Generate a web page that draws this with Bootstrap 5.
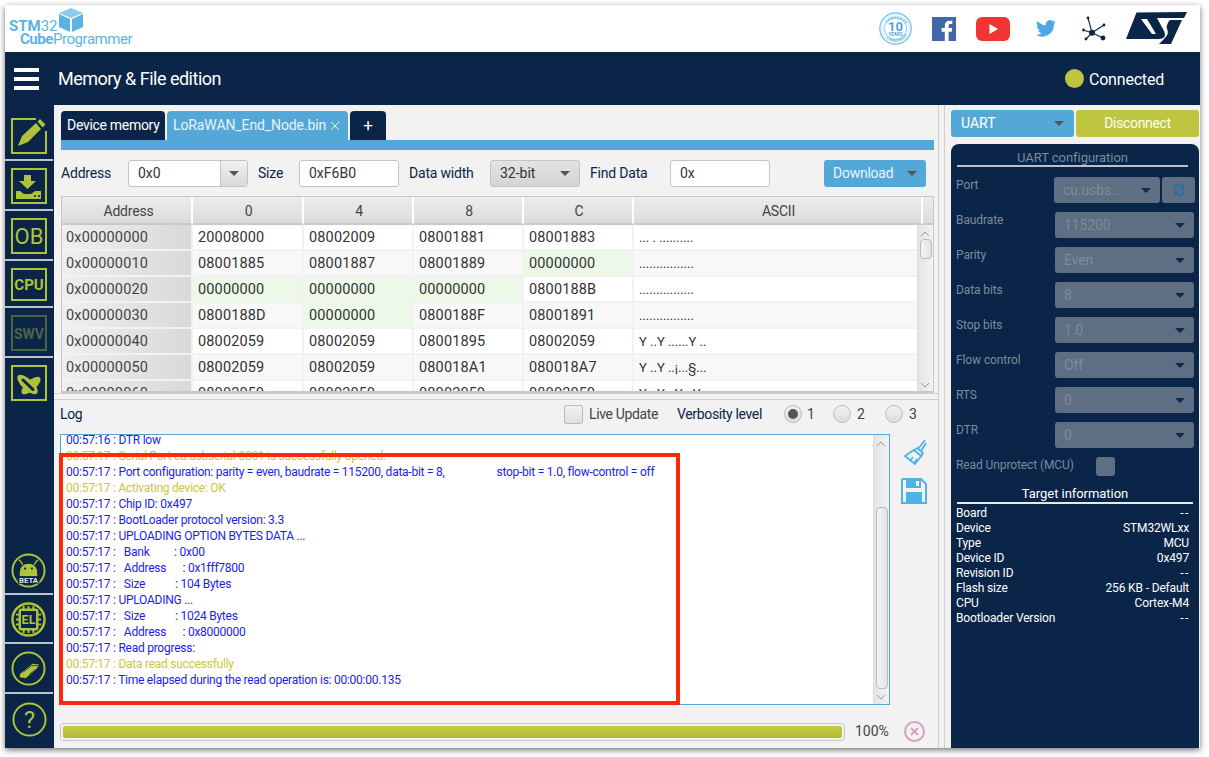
<!DOCTYPE html>
<html lang="en">
<head>
<meta charset="utf-8">
<title>STM32CubeProgrammer</title>
<link rel="stylesheet" href="https://cdn.jsdelivr.net/npm/bootstrap@5.3.0/dist/css/bootstrap.min.css">
<style>
html,body{height:100%;overflow:hidden;background:#fff}
body{font-family:"Roboto","Liberation Sans",sans-serif;font-variant-ligatures:none;padding:5px 9px 9px 5px;color:#0a2548}
.appwin{width:1195px;height:743px;box-shadow:0 2px 6px rgba(0,0,0,.55);background:#f2f2f2;position:relative;overflow:hidden}
.apphead{height:47px;background:#fff;flex:none}
.logo-box{width:135px;height:47px;position:relative;color:#5cb3e0;line-height:1}
.logo-st32{position:absolute;left:4px;top:14px;font-size:15px;font-weight:700}
.logo-st32 span{font-weight:400}
.logo-cube{position:absolute;left:15px;top:27px;font-size:15px;font-weight:700;letter-spacing:-.45px;white-space:nowrap}
.logo-cube span{font-weight:400}
.logo-svg{position:absolute;left:53px;top:2px}
.head-icons{padding-right:13px}
.titlebar{height:53px;background:#0a2548;color:#fff;flex:none;padding-left:9px}
.burger{width:25px;height:22px;display:flex;flex-direction:column;justify-content:space-between;margin-right:19px}
.burger i{display:block;height:4px;background:#fff}
.title-txt{font-size:18px;letter-spacing:-.5px}
.conn-dot{width:19px;height:19px;border-radius:50%;background:#bec53e;margin-right:5px}
.conn-txt{font-size:16px;letter-spacing:-.2px;margin-right:36px;padding-top:2px}
.sidenav{width:49px;background:#0a2548;flex:none;padding-top:13px}
.navcell{height:50px;flex:none;padding-top:7px}
.navcell.firstcell{height:43px;padding-top:0}
.navcell.shortcell{height:47px}
.navcell.sep{border-bottom:2px solid #bcc2ca;width:48px}
.navcell svg{margin-left:6px;display:block}
.side-spacer{flex:1}
.navround{flex:none;width:48px}
.navround svg{display:block}
.navround.sep{border-bottom:2px solid #bcc2ca}
.centerpane{width:884px;flex:none;padding:0;position:relative}
.tabrow{padding:6px 0 0 7px;height:35px;flex:none}
.tabitem{height:29px;padding:0 6px;font-size:14px;letter-spacing:-.3px;color:#fff;background:#0a2548;border-radius:4px 4px 0 0;margin-right:2px;flex:none;white-space:nowrap}
.tabitem.on{background:#54a8d8;letter-spacing:-.1px;color:#e8f3fa}
.tabstrip{height:10px;background:#54a8d8;margin:0 4px 0 7px;flex:none}
.toolrow{height:46px;padding:0 0 0 7px;font-size:14px;letter-spacing:-.2px;flex:none}
.fieldbox{height:27px;background:#fff;border:1px solid #c4c4c4;border-radius:3px;font-size:14px;color:#333;padding:0 9px;display:flex;align-items:center;letter-spacing:0}
.combo-btn{width:27px;height:25px;background:linear-gradient(#f2f2f2,#d8d8d8);border-left:1px solid #c4c4c4;display:flex;align-items:center;justify-content:center;margin-right:-9px;border-radius:0 3px 3px 0}
.tri{display:block;width:0;height:0;border-left:5px solid transparent;border-right:5px solid transparent;border-top:5px solid #555;flex:none}
.graybox{background:linear-gradient(#e4e4e4,#d4d4d4)}
.dl-btn{width:102px;height:27px;background:#54a8d8;color:#e8f3fa;border-radius:3px;font-size:14px;padding:0 9px;letter-spacing:-.25px}
.tablewrap{margin:0 4px 0 7px;height:197px;border:1px solid #c8c8c8;border-bottom:2px solid #c8c8c8;background:#fff;position:relative;overflow:hidden;flex:none}
.hextable{width:100%;table-layout:fixed;border-collapse:separate;border-spacing:0;margin:0;font-size:14.5px}
.hextable th{height:28px;font-weight:400;text-align:center;color:#444;background:linear-gradient(#ececec,#dcdcdc);border-right:2px solid #fff;border-bottom:2px solid #c8c8c8;padding:2px 0 0 2px;font-size:14px;letter-spacing:-.2px}
.hextable th:first-child{padding-left:4px}
.hextable th:last-child{border-right:0}
.hextable td{height:26px;padding:2px 0 0 5px;color:#333;border-right:2px solid #f2f2f2;border-bottom:2px solid #f2f2f2;background:#fff;white-space:nowrap;overflow:hidden;letter-spacing:.15px}
.hextable tr:nth-child(even) td{background:#f8f8f8}
.hextable td.addrcell,.hextable tr:nth-child(even) td.addrcell{background:linear-gradient(90deg,#efefef,#d9d9d9);color:#444;padding-left:4px}
.hextable td.zerocell,.hextable tr:nth-child(even) td.zerocell{background:#ecf9e8}
.hextable td.asciicell{font-size:13px;letter-spacing:0}
.vscroll{position:absolute;right:0;bottom:0;width:16px;background:linear-gradient(90deg,#e4e4e4,#f2f2f2);border-left:1px solid #ddd}
.vscroll.tblscroll{top:28px}
.scarrow{position:absolute;left:3px;width:8px;height:8px}
.thumb{position:absolute;left:2px;width:12px;background:linear-gradient(90deg,#f4f4f4,#e2e2e2);border:1px solid #bbb;border-radius:4px}
.splitline{height:7px;border-top:1px solid #d0d0d0;border-bottom:1px solid #d0d0d0;background:#f2f2f2;flex:none}
.loghead{height:34px;padding:0 21px 6px 6px;font-size:14px;letter-spacing:-.35px;flex:none}
.logbox{margin-left:6px;width:830px;height:271px;background:#fff;border:1px solid #54a8d8;position:relative;overflow:hidden;font-size:12px;line-height:16px;color:#1b1bff;letter-spacing:-.25px;flex:none}
.loglines{margin-top:-3px;padding-left:5px;white-space:pre}
.loglines .okline{color:#c9c93a}
.logtools{margin-left:11px;gap:13px;padding-top:5px}
.fake-check{width:19px;height:19px;background:linear-gradient(#f2f2f2,#e0e0e0);border:1px solid #bbb;border-radius:2px;margin-right:6px;flex:none}
.fake-radio{width:18px;height:18px;border-radius:50%;background:linear-gradient(#f2f2f2,#dcdcdc);border:1px solid #bbb;display:flex;align-items:center;justify-content:center;margin-right:5px;flex:none}
.fake-radio i{width:10px;height:10px;border-radius:50%;background:#555}
.greytxt{color:#444}
.progrow{padding:16px 0 0 6px;flex:none}
.progoutline{width:785px;height:18px;border:1px solid #c8c8c8;border-radius:3px;background:#f2f2f2;padding:2px}
.progfill{height:100%;background:linear-gradient(#c4ca44,#b5bb38);border-radius:2px}
.progtxt{font-size:14px;margin-left:10px;color:#444;width:49px}
.rightgut{width:7px;border-left:1px solid #d0d0d0;border-right:1px solid #d0d0d0;flex:none}
.rightpane{flex:1;padding:5px 1px 0 6px;min-width:0}
.toprow{gap:2px;height:27px;flex:none}
.uart-sel{width:123px;background:#54a8d8;color:#fff;border-radius:3px;font-size:14px;padding:0 10px;flex:none}
.disc-btn{width:123px;background:#bec53e;color:#fdfdf2;border-radius:3px;font-size:14px;letter-spacing:-.35px;flex:none}
.confpanel{background:#0a2548;border-radius:8px 8px 0 0;margin-top:7px;flex:1;padding:6px 6px 0 6px;font-size:12px;line-height:15px;color:#fff;min-height:0}
.confhead{color:#7c8a9d;text-align:center;font-size:13px;border-bottom:2px solid #b9c0c9;margin-right:5px;height:17px;line-height:15px;letter-spacing:-.05px;flex:none}
.confgap{height:16px;flex:none}
.confrow{height:35px;color:#7c8a9d;position:relative;letter-spacing:-.1px;flex:none}
.confrow.lastconf{height:15px}
.conflabel{width:98px;flex:none;margin:-5px 0 0 -1px;padding-right:0}
.conflabel.widelabel{width:140px}
.dimsel{height:26px;width:139px;flex:none;background:#5e6e83;border-radius:3px;color:#7f8b9a;font-size:14px;padding:0 9px;margin:-6px 0 0 1px}
.dimsel .tri{border-top-color:#0e2a4d}
.dimsel.dimsel-port{width:106px;margin-left:0}
.refresh-btn{width:33px;height:26px;background:#5e6e83;border-radius:3px;margin-left:2px;margin-top:-6px;flex:none}
.dimcheck{width:19px;height:19px;background:#5e6e83;border-radius:3px;margin-top:-6px;flex:none}
.tgthead{color:#fff;text-align:center;font-size:13px;border-bottom:2px solid #e8e8e8;margin:8px 0 2px 0;height:18px;line-height:16px;letter-spacing:-.05px;flex:none}
.tgtrow{height:15px;letter-spacing:-.15px;padding-right:4px;margin-left:-1px;flex:none}
.dashval{letter-spacing:1.6px;margin-right:-1px}
.redbox{position:absolute;left:54px;top:448px;width:621px;height:252px;border:4px solid #fa2a0a;pointer-events:none}
</style>
</head>
<body>
<div class="appwin d-flex flex-column">
  <header class="apphead d-flex justify-content-between align-items-center">
    <div class="logo-box">
      <span class="logo-st32">STM<span>32</span></span>
      <span class="logo-cube">Cube<span>Programmer</span></span>
      <svg class="logo-svg" width="26" height="26" viewBox="0 0 26 26"><path d="M13 1 25 6 13 11 1 6Z" fill="#8ccbec"/><path d="M1 7 12 12V25L1 20Z" fill="#5cb3e0"/><path d="M25 7 14 12V25L25 20Z" fill="#5cb3e0"/></svg>
    </div>
    <div class="head-icons d-flex align-items-center">
      <svg width="33" height="33" viewBox="0 0 33 33" class="me-3"><defs><path id="arcTop" d="M4.300 18A12.300 12.300 0 0 1 28.700 18"/><path id="arcBot" d="M3.200 18A13.400 13.400 0 0 0 29.800 18"/></defs><circle cx="16.500" cy="16.500" r="15.700" fill="#eaf6fc" stroke="#6cbfe8" stroke-width="1.200"/><circle cx="16.500" cy="16.500" r="11" fill="#fff" stroke="#6cbfe8" stroke-width=".8"/><text font-size="4" font-family="Roboto" font-weight="700" fill="#6cbfe8"><textPath href="#arcTop" startOffset="8">LONGEVITY</textPath></text><text font-size="3.600" font-family="Roboto" font-weight="700" fill="#6cbfe8"><textPath href="#arcBot" startOffset="9">COMMITMENT</textPath></text><text x="16.500" y="19" text-anchor="middle" font-size="13" font-weight="700" font-family="Roboto" fill="#4ba5d8">10</text><text x="16.500" y="24" text-anchor="middle" font-size="4.500" font-weight="700" font-family="Roboto" fill="#4ba5d8">YEARS</text></svg>
      <svg width="24" height="24" viewBox="0 0 24 24" style="margin:0 20px 0 4px"><rect width="24" height="24" fill="#4267a8"/><path d="M16.600 24v-9.300h3.100l.5-3.600h-3.600V8.800c0-1 .3-1.800 1.800-1.800h1.900V3.800c-.3 0-1.500-.1-2.800-.1-2.800 0-4.700 1.700-4.700 4.800v2.600H9.600v3.600h3.200V24z" fill="#fff"/></svg>
      <svg width="34" height="24" viewBox="0 0 34 24" style="margin-right:26px"><rect width="34" height="24" rx="6" fill="#f03634"/><path d="M13.500 7v10l8.500-5z" fill="#fff"/></svg>
      <svg width="20" height="17" viewBox="0 0 24 20" style="margin-right:26px"><path d="M24 2.400a9.800 9.800 0 0 1-2.800.8A4.900 4.900 0 0 0 23.300.5a9.800 9.800 0 0 1-3.100 1.200 4.900 4.900 0 0 0-8.400 4.500A14 14 0 0 1 1.700 1a4.900 4.900 0 0 0 1.500 6.600 4.900 4.900 0 0 1-2.200-.6c0 2.400 1.700 4.400 3.900 4.900a4.900 4.900 0 0 1-2.200.1 4.900 4.900 0 0 0 4.600 3.400A9.900 9.900 0 0 1 0 17.400 14 14 0 0 0 21.500 5v-.6A10 10 0 0 0 24 2.400z" fill="#4ba8e6"/></svg>
      <svg width="26" height="26" viewBox="0 -1 26 26" style="margin-right:18px"><g stroke="#0a2548" stroke-width="1.100"><path d="M10 15.700 6 1M10 15.700 1 13M10 15.700 22 8M10 15.700 21 21M10 15.700 4 22"/></g><g fill="#0a2548"><circle cx="10" cy="15.700" r="3"/><circle cx="6" cy="1" r="1.400"/><circle cx="1.500" cy="13" r="1.400"/><circle cx="22" cy="8" r="1.400"/><circle cx="21" cy="21" r="2.400"/><circle cx="4" cy="22" r="1.400"/></g></svg>
      <svg width="61" height="33" viewBox="0 0 61 33"><path d="M10.500.5 61 0 58 6H31L38 19C40.500 24 38 27 33 27H0Z" fill="#0a2548"/><path d="M15 7H21L30 22H26Z" fill="#fff"/><path d="M44 8H56L45 32H33L38 27C41 24 43 21 41 17 40 14 42 10 44 8Z" fill="#0a2548"/></svg>
    </div>
  </header>

  <div class="titlebar d-flex align-items-center">
    <div class="burger"><i></i><i></i><i></i></div>
    <div class="title-txt flex-grow-1">Memory &amp; File edition</div>
    <span class="conn-dot"></span><span class="conn-txt">Connected</span>
  </div>

  <div class="d-flex flex-grow-1" style="min-height:0">
    <nav class="sidenav d-flex flex-column">
      <div class="navcell firstcell sep"><svg width="36" height="36" viewBox="0 0 36 36"><path d="M25 1H1V35H35V13" fill="none" stroke="#aec23a" stroke-width="2"/><path d="M7 28 11 18 25 5 30 11 17 24Z" fill="#aec23a"/><path d="M26.500 3.500 29 1 34.500 6.500 31.500 9.500Z" fill="#aec23a"/></svg></div>
      <div class="navcell sep"><svg width="36" height="36" viewBox="0 0 36 36"><rect x="1" y="1" width="34" height="34" fill="none" stroke="#aec23a" stroke-width="2"/><path d="M13 7H20V13H25L16.500 21 8 13H13Z" fill="#aec23a"/><path d="M5 23H9L13 26H20L24 23H30V31H5Z" fill="#aec23a"/><path d="M23 28H25M27 28H29" stroke="#0a2548" stroke-width="1.500"/></svg></div>
      <div class="navcell sep"><svg width="36" height="36" viewBox="0 0 36 36"><rect x="1" y="1" width="34" height="34" fill="none" stroke="#aec23a" stroke-width="2"/><text x="18" y="26" text-anchor="middle" font-size="22" font-family="Roboto" fill="#aec23a">OB</text></svg></div>
      <div class="navcell shortcell sep"><svg width="36" height="33" viewBox="0 0 36 33"><rect x="1" y="1" width="34" height="31" fill="none" stroke="#aec23a" stroke-width="2"/><text x="18" y="22" text-anchor="middle" font-size="15" font-weight="700" font-family="Roboto" fill="#aec23a">CPU</text></svg></div>
      <div class="navcell sep"><svg width="36" height="36" viewBox="0 0 36 36" opacity=".4"><rect x="1" y="1" width="34" height="34" fill="none" stroke="#aec23a" stroke-width="2"/><text x="18" y="23.500" text-anchor="middle" font-size="14" font-weight="700" font-family="Roboto" fill="#aec23a">SWV</text></svg></div>
      <div class="navcell"><svg width="36" height="36" viewBox="0 0 36 36"><rect x="1" y="1" width="34" height="34" fill="none" stroke="#aec23a" stroke-width="2"/><ellipse cx="20" cy="20.500" rx="12" ry="5" transform="rotate(-42 20 20.500)" fill="#aec23a"/><ellipse cx="16.500" cy="19.500" rx="13" ry="5.500" transform="rotate(43 16.500 19.500)" fill="#aec23a"/><path d="M12 15 22 24.500" stroke="#0a2548" stroke-width="3" stroke-linecap="round"/></svg></div>
      <div class="side-spacer"></div>
      <div class="navround sep" style="height:48px"><svg width="35" height="35" viewBox="0 0 36 36" style="margin:6px 0 0 6px"><circle cx="18" cy="18" r="16.500" fill="none" stroke="#aec23a" stroke-width="2"/><path d="M12 12C11 9 10 8 8 7M24 12C25 9 26 8 28 7" fill="none" stroke="#aec23a" stroke-width="1.500"/><path d="M9 21C9 14 13 11 18 11S27 14 27 21V24H9Z" fill="#aec23a"/><circle cx="14.500" cy="16" r="1.200" fill="#0a2548"/><circle cx="21.500" cy="16" r="1.200" fill="#0a2548"/><rect x="7" y="24" width="22" height="7.500" fill="#0a2548"/><text x="18" y="30.500" text-anchor="middle" font-size="8" font-weight="700" font-family="Roboto" fill="#dfe3e8">BETA</text></svg></div>
      <div class="navround sep" style="height:49px"><svg width="35" height="35" viewBox="0 0 36 36" style="margin:7px 0 0 6px"><circle cx="18" cy="18" r="16.500" fill="none" stroke="#aec23a" stroke-width="2.500"/><rect x="9" y="8" width="18" height="20" rx="1.500" fill="none" stroke="#aec23a" stroke-width="2.500"/><path d="M5 13H9M5 18H9M5 23H9M27 13H31M27 18H31M27 23H31M13 4V8M18 4V8M23 4V8M13 28V32M18 28V32M23 28V32" stroke="#aec23a" stroke-width="2"/><text x="18" y="23" text-anchor="middle" font-size="13" font-weight="700" font-family="Roboto" fill="#aec23a">EL</text></svg></div>
      <div class="navround sep" style="height:50px"><svg width="35" height="35" viewBox="0 0 36 36" style="margin:7px 0 0 6px"><circle cx="18" cy="18" r="16.500" fill="none" stroke="#aec23a" stroke-width="2"/><path d="M9 24 22 13 29 14 26 19 15 28 9 27Z" fill="#aec23a"/><path d="M13 21.500 21 15 28 15 M19 24 26 18.500" stroke="#0a2548" stroke-width=".8" fill="none"/></svg></div>
      <div class="navround" style="height:54px"><svg width="35" height="35" viewBox="0 0 36 36" style="margin:8px 0 0 7px"><circle cx="18" cy="18" r="16.500" fill="none" stroke="#aec23a" stroke-width="2"/><text x="18" y="26.500" text-anchor="middle" font-size="24" font-family="Roboto" fill="#aec23a">?</text></svg></div>
    </nav>

    <main class="centerpane d-flex flex-column">
      <div class="tabrow d-flex">
        <div class="tabitem d-flex align-items-center" style="width:104px">Device memory</div>
        <div class="tabitem on d-flex align-items-center" style="width:181px">LoRaWAN_End_Node.bin<svg width="10" height="10" viewBox="0 0 10 10" class="ms-1"><path d="M1 1 9 9M9 1 1 9" stroke="#e8f3fa" stroke-width="1"/></svg></div>
        <div class="tabitem d-flex align-items-center justify-content-center" style="width:36px;font-size:17px">+</div>
      </div>
      <div class="tabstrip"></div>
      <div class="toolrow d-flex align-items-center">
        <span style="width:67px">Address</span>
        <div class="fieldbox" style="width:120px"><span class="flex-grow-1">0x0</span><span class="combo-btn"><i class="tri"></i></span></div>
        <span style="margin-left:10px;width:41px">Size</span>
        <div class="fieldbox" style="width:100px">0xF6B0</div>
        <span style="margin-left:10px;width:81px">Data width</span>
        <div class="fieldbox graybox justify-content-between" style="width:90px"><span>32-bit</span><i class="tri"></i></div>
        <span style="margin-left:10px;width:80px">Find Data</span>
        <div class="fieldbox" style="width:100px">0x</div>
        <div class="dl-btn d-flex align-items-center justify-content-between" style="margin-left:54px"><span>Download</span><i class="tri"></i></div>
      </div>
      <div class="tablewrap">
        <table class="hextable">
          <colgroup><col style="width:131px"><col style="width:111px"><col style="width:110px"><col style="width:110px"><col style="width:110px"><col style="width:289px"><col></colgroup>
          <thead><tr><th>Address</th><th>0</th><th>4</th><th>8</th><th>C</th><th>ASCII</th><th></th></tr></thead>
          <tbody>
            <tr><td class="addrcell">0x00000000</td><td>20008000</td><td>08002009</td><td>08001881</td><td>08001883</td><td class="asciicell" colspan="2">... . ..........</td></tr>
            <tr><td class="addrcell">0x00000010</td><td>08001885</td><td>08001887</td><td>08001889</td><td class="zerocell">00000000</td><td class="asciicell" colspan="2">................</td></tr>
            <tr><td class="addrcell">0x00000020</td><td class="zerocell">00000000</td><td class="zerocell">00000000</td><td class="zerocell">00000000</td><td>0800188B</td><td class="asciicell" colspan="2">................</td></tr>
            <tr><td class="addrcell">0x00000030</td><td>0800188D</td><td class="zerocell">00000000</td><td>0800188F</td><td>08001891</td><td class="asciicell" colspan="2">................</td></tr>
            <tr><td class="addrcell">0x00000040</td><td>08002059</td><td>08002059</td><td>08001895</td><td>08002059</td><td class="asciicell" colspan="2">Y ..Y ......Y ..</td></tr>
            <tr><td class="addrcell">0x00000050</td><td>08002059</td><td>08002059</td><td>080018A1</td><td>080018A7</td><td class="asciicell" colspan="2">Y ..Y ..¡...§...</td></tr>
            <tr><td class="addrcell">0x00000060</td><td>08002059</td><td>08002059</td><td>08002059</td><td>08002059</td><td class="asciicell" colspan="2">Y ..Y ..Y ..Y ..</td></tr>
          </tbody>
        </table>
        <div class="vscroll tblscroll">
          <svg class="scarrow" style="top:5px" viewBox="0 0 8 8"><path d="M0 6 4 2 8 6" fill="none" stroke="#999"/></svg>
          <div class="thumb" style="top:14px;height:20px"></div>
          <svg class="scarrow" style="bottom:2px" viewBox="0 0 8 8"><path d="M0 2 4 6 8 2" fill="none" stroke="#999"/></svg>
        </div>
      </div>
      <div class="splitline"></div>
      <div class="loghead d-flex align-items-center">
        <span class="flex-grow-1">Log</span>
        <span class="fake-check"></span><span class="greytxt" style="width:88px">Live Update</span>
        <span style="width:107px">Verbosity level</span>
        <span class="fake-radio"><i></i></span><span class="greytxt" style="width:26px">1</span>
        <span class="fake-radio" style="margin-right:6px"></span><span class="greytxt" style="width:28px">2</span>
        <span class="fake-radio" style="margin-right:6px"></span><span class="greytxt" style="width:8px">3</span>
      </div>
      <div class="d-flex">
        <div class="logbox">
          <div class="loglines"><div>00:57:16 : DTR low</div><div class="okline">00:57:17 : Serial Port cu.usbserial-0001 is successfully opened.</div><div>00:57:17 : Port configuration: parity = even, baudrate = 115200, data-bit = 8,                   stop-bit = 1.0, flow-control = off</div><div class="okline">00:57:17 : Activating device: OK</div><div>00:57:17 : Chip ID: 0x497</div><div>00:57:17 : BootLoader protocol version: 3.3</div><div>00:57:17 : UPLOADING OPTION BYTES DATA ...</div><div>00:57:17 :   Bank         : 0x00</div><div>00:57:17 :   Address      : 0x1fff7800</div><div>00:57:17 :   Size           : 104 Bytes</div><div>00:57:17 : UPLOADING ...</div><div>00:57:17 :   Size           : 1024 Bytes</div><div>00:57:17 :   Address      : 0x8000000</div><div>00:57:17 : Read progress:</div><div class="okline">00:57:17 : Data read successfully</div><div>00:57:17 : Time elapsed during the read operation is: 00:00:00.135</div></div>
          <div class="vscroll" style="top:0">
            <svg class="scarrow" style="top:5px" viewBox="0 0 8 8"><path d="M0 6 4 2 8 6" fill="none" stroke="#999"/></svg>
            <div class="thumb" style="top:72px;height:182px"></div>
            <svg class="scarrow" style="bottom:3px" viewBox="0 0 8 8"><path d="M0 2 4 6 8 2" fill="none" stroke="#999"/></svg>
          </div>
        </div>
        <div class="logtools d-flex flex-column">
          <svg width="24" height="26" viewBox="0 0 24 26" style="margin-left:2px"><g fill="none" stroke="#4fb3e8" stroke-width="1.800"><path d="M15 10 22 1M18 12 23 4"/><path d="M14 9 20 14 18 17 11 11Z"/><path d="M11 11 2 17 12 25 19 16"/><path d="M7 22 10 18M11 24 14 20"/></g></svg>
          <svg width="26" height="26" viewBox="0 0 26 26"><path d="M2 1H20L25 6V25H1V2Z" fill="none" stroke="#4fb3e8" stroke-width="2"/><path d="M5 2H20V10H5ZM5 14H21V24H5Z" fill="#4fb3e8"/><rect x="15" y="3" width="3" height="5" fill="#fff"/></svg>
        </div>
      </div>
      <div class="progrow d-flex align-items-center">
        <div class="progoutline"><div class="progfill" style="width:100%"></div></div>
        <span class="progtxt">100%</span>
        <svg width="21" height="21" viewBox="0 0 21 21"><circle cx="10.500" cy="10.500" r="9.500" fill="none" stroke="#d9a0bf" stroke-width="2"/><path d="M7 7 14 14M14 7 7 14" stroke="#d9a0bf" stroke-width="2"/></svg>
      </div>
    </main>

    <div class="rightgut"></div>
    <aside class="rightpane d-flex flex-column">
      <div class="toprow d-flex">
        <div class="uart-sel d-flex align-items-center justify-content-between"><span>UART</span><i class="tri"></i></div>
        <div class="disc-btn d-flex align-items-center justify-content-center">Disconnect</div>
      </div>
      <div class="confpanel d-flex flex-column">
        <div class="confhead">UART configuration</div>
        <div class="confgap"></div>
        <div class="confrow d-flex"><span class="conflabel">Port</span><div class="dimsel dimsel-port d-flex align-items-center justify-content-between"><span>cu.usbs...</span><i class="tri"></i></div><div class="refresh-btn d-flex align-items-center justify-content-center"><svg width="14" height="14" viewBox="0 0 14 14"><path d="M2 6A5 5 0 0 1 11 4M12 8A5 5 0 0 1 3 10" fill="none" stroke="#2f6d9e" stroke-width="2"/><path d="M12 1V6H7ZM2 13V8H7Z" fill="#2f6d9e"/></svg></div></div>
        <div class="confrow d-flex"><span class="conflabel">Baudrate</span><div class="dimsel d-flex align-items-center justify-content-between"><span>115200</span><i class="tri"></i></div></div>
        <div class="confrow d-flex"><span class="conflabel">Parity</span><div class="dimsel d-flex align-items-center justify-content-between"><span>Even</span><i class="tri"></i></div></div>
        <div class="confrow d-flex"><span class="conflabel">Data bits</span><div class="dimsel d-flex align-items-center justify-content-between"><span>8</span><i class="tri"></i></div></div>
        <div class="confrow d-flex"><span class="conflabel">Stop bits</span><div class="dimsel d-flex align-items-center justify-content-between"><span>1.0</span><i class="tri"></i></div></div>
        <div class="confrow d-flex"><span class="conflabel">Flow control</span><div class="dimsel d-flex align-items-center justify-content-between"><span>Off</span><i class="tri"></i></div></div>
        <div class="confrow d-flex"><span class="conflabel">RTS</span><div class="dimsel d-flex align-items-center justify-content-between"><span>0</span><i class="tri"></i></div></div>
        <div class="confrow d-flex"><span class="conflabel">DTR</span><div class="dimsel d-flex align-items-center justify-content-between"><span>0</span><i class="tri"></i></div></div>
        <div class="confrow lastconf d-flex"><span class="conflabel widelabel">Read Unprotect (MCU)</span><div class="dimcheck"></div></div>
        <div class="tgthead">Target information</div>
        <div class="tgtrow d-flex justify-content-between"><span>Board</span><span class="dashval">--</span></div>
        <div class="tgtrow d-flex justify-content-between"><span>Device</span><span>STM32WLxx</span></div>
        <div class="tgtrow d-flex justify-content-between"><span>Type</span><span>MCU</span></div>
        <div class="tgtrow d-flex justify-content-between"><span>Device ID</span><span>0x497</span></div>
        <div class="tgtrow d-flex justify-content-between"><span>Revision ID</span><span class="dashval">--</span></div>
        <div class="tgtrow d-flex justify-content-between"><span>Flash size</span><span>256 KB - Default</span></div>
        <div class="tgtrow d-flex justify-content-between"><span>CPU</span><span>Cortex-M4</span></div>
        <div class="tgtrow d-flex justify-content-between"><span>Bootloader Version</span><span class="dashval">--</span></div>
      </div>
    </aside>
  </div>
  <div class="redbox"></div>
</div>
<script src="https://cdn.jsdelivr.net/npm/bootstrap@5.3.0/dist/js/bootstrap.bundle.min.js"></script>
</body>
</html>
